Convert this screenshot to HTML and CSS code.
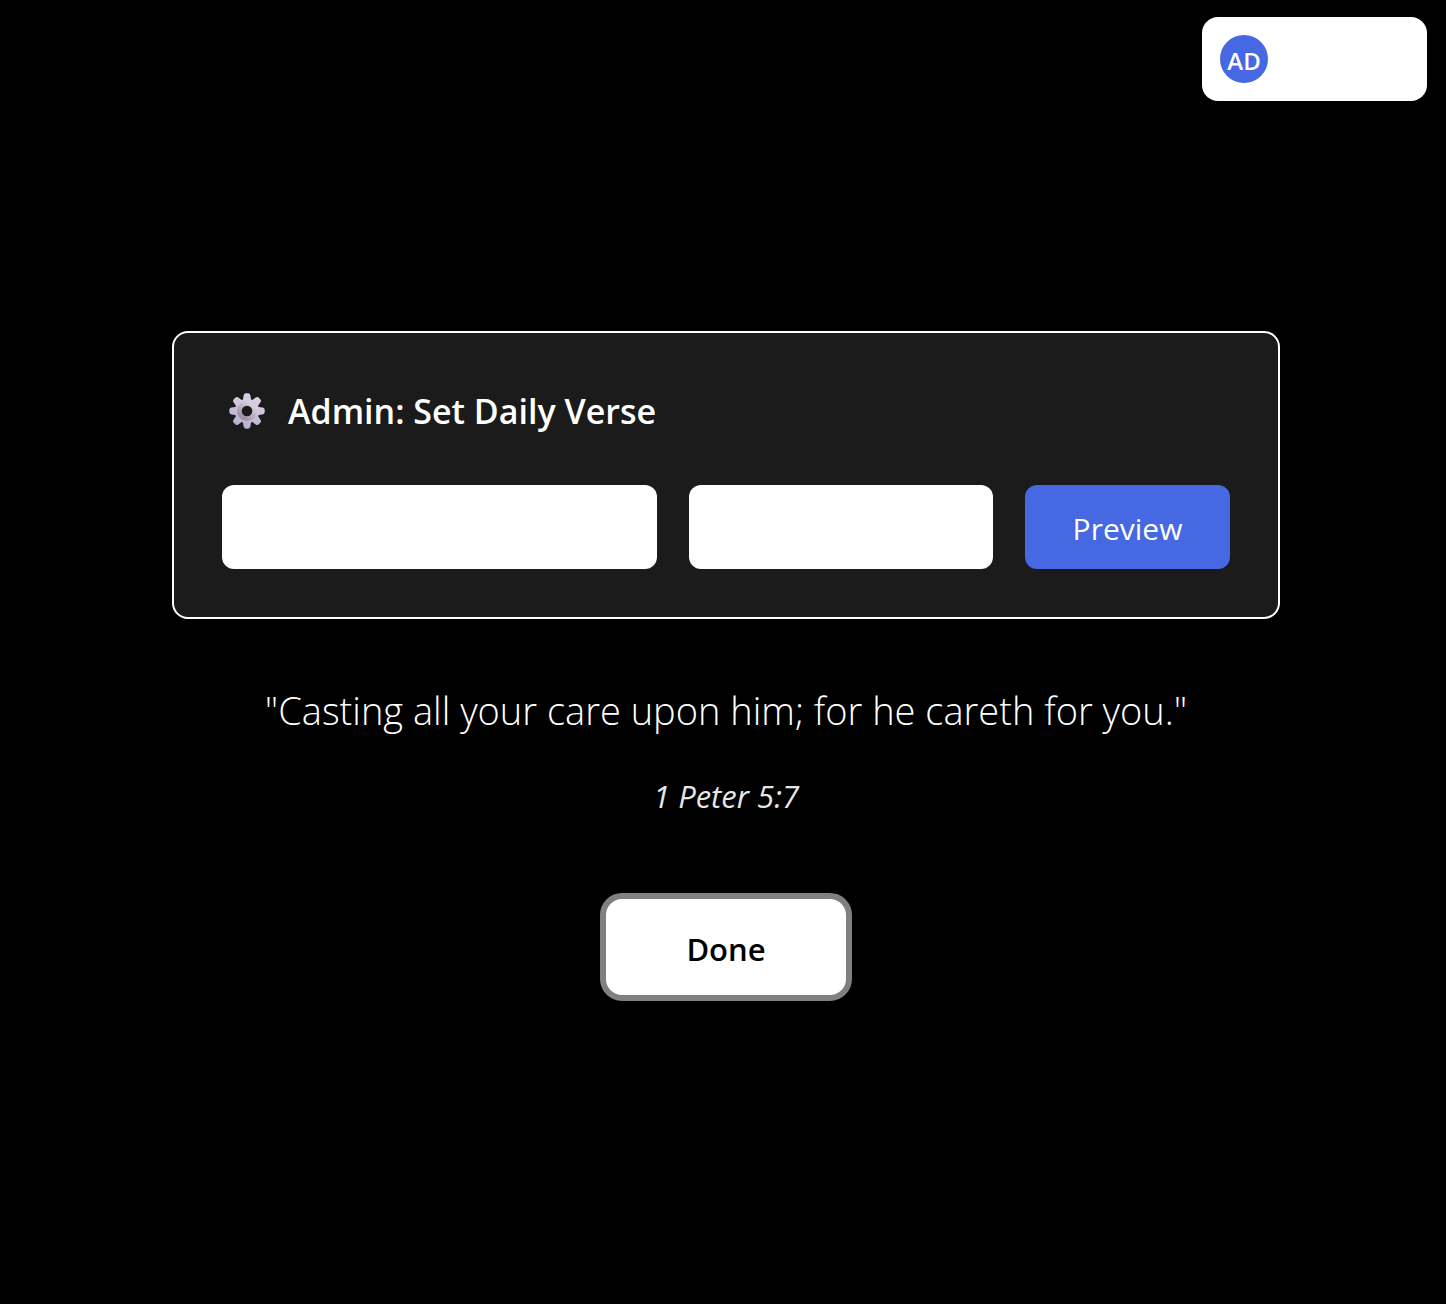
FILE: index.html
```html
<!DOCTYPE html>
<html lang="en">
<head>
  <meta charset="utf-8">
  <meta name="viewport" content="width=device-width, initial-scale=1">
  <title>Daily Verse</title>
  <link rel="stylesheet" href="styles.css">
</head>
<body>
  <header class="topbar">
    <div class="account"><span class="avatar">AD</span></div>
  </header>
  <main class="content">
    <form class="admin-card">
      <h1 class="admin-title">
        <svg class="gear" viewBox="0 0 36 36" aria-hidden="true">
          <defs>
            <linearGradient id="gear-body" x1="0.7" y1="0" x2="0.3" y2="1">
              <stop offset="0" stop-color="#dcd6e6"/>
              <stop offset="1" stop-color="#b9acd0"/>
            </linearGradient>
            <linearGradient id="gear-ring" x1="0.8" y1="0.1" x2="0.2" y2="0.9">
              <stop offset="0" stop-color="#d5cfdc"/>
              <stop offset="1" stop-color="#9c94a6"/>
            </linearGradient>
            <clipPath id="gear-shape">
              <circle cx="18" cy="18" r="12.300"/>
              <path d="M13.400 10L14.600 2.400Q15 .3 17 .3H19Q21 .3 21.400 2.400L22.600 10Z"/>
              <path transform="rotate(45 18 18)" d="M13.400 10L14.600 2.400Q15 .3 17 .3H19Q21 .3 21.400 2.400L22.600 10Z"/>
              <path transform="rotate(90 18 18)" d="M13.400 10L14.600 2.400Q15 .3 17 .3H19Q21 .3 21.400 2.400L22.600 10Z"/>
              <path transform="rotate(135 18 18)" d="M13.400 10L14.600 2.400Q15 .3 17 .3H19Q21 .3 21.400 2.400L22.600 10Z"/>
              <path transform="rotate(180 18 18)" d="M13.400 10L14.600 2.400Q15 .3 17 .3H19Q21 .3 21.400 2.400L22.600 10Z"/>
              <path transform="rotate(225 18 18)" d="M13.400 10L14.600 2.400Q15 .3 17 .3H19Q21 .3 21.400 2.400L22.600 10Z"/>
              <path transform="rotate(270 18 18)" d="M13.400 10L14.600 2.400Q15 .3 17 .3H19Q21 .3 21.400 2.400L22.600 10Z"/>
              <path transform="rotate(315 18 18)" d="M13.400 10L14.600 2.400Q15 .3 17 .3H19Q21 .3 21.400 2.400L22.600 10Z"/>
            </clipPath>
          </defs>
          <rect width="36" height="36" fill="url(#gear-body)" clip-path="url(#gear-shape)"/>
          <circle cx="18" cy="18" r="7.700" fill="#1b1b1b" stroke="url(#gear-ring)" stroke-width="4.800"/>
        </svg>
        <span>Admin: Set Daily Verse</span>
      </h1>
      <div class="fields">
        <input class="field" type="text" name="verse" aria-label="Verse">
        <input class="field" type="text" name="reference" aria-label="Reference">
        <button class="preview" type="button">Preview</button>
      </div>
    </form>
    <p class="verse">"Casting all your care upon him; for he careth for you."</p>
    <p class="reference">1 Peter 5:7</p>
    <button class="done" type="button">Done</button>
  </main>
</body>
</html>
```
FILE: styles.css
```css
* {
  box-sizing: border-box;
}

body {
  margin: 0;
  min-height: 100vh;
  background: #000;
  color: #fff;
  font-family: "Open Sans", "Noto Sans", sans-serif;
}

.topbar {
  display: flex;
  justify-content: flex-end;
  padding: 17px 19px 0;
}

.account {
  display: flex;
  align-items: center;
  width: 225px;
  height: 84px;
  padding: 0 18px;
  border-radius: 16px;
  background: #fff;
}

.avatar {
  display: flex;
  align-items: center;
  justify-content: center;
  width: 48px;
  height: 48px;
  padding-top: 2px;
  border-radius: 50%;
  background: #4668e3;
  font-size: 24px;
  font-weight: 600;
}

.content {
  display: flex;
  flex-direction: column;
  align-items: center;
  padding: 230px 166px 48px 172px;
}

.admin-card {
  width: 100%;
  padding: 48px;
  border: 2px solid #fff;
  border-radius: 16px;
  background: #1b1b1b;
}

.admin-title {
  display: flex;
  align-items: center;
  gap: 23px;
  margin: 0 0 44px;
  padding-left: 7px;
  font-size: 34px;
  font-weight: 600;
  line-height: 60px;
}

.gear {
  flex: none;
  width: 36px;
  height: 36px;
}

.fields {
  display: grid;
  grid-template-columns: 10fr 7fr 205px;
  gap: 32px;
}

.field,
.preview {
  width: 100%;
  min-width: 0;
  height: 84px;
  border: 0;
  border-radius: 12px;
  font-family: inherit;
  font-size: 30px;
}

.field {
  padding: 0 24px;
  background: #fff;
  color: #000;
}

.preview {
  padding-top: 4px;
  background: #4668e3;
  color: #fff;
}

.verse {
  margin: 61px 0 32px;
  font-size: 38px;
  font-weight: 300;
  line-height: 60px;
  text-align: center;
}

.reference {
  margin: 0 0 73px;
  color: #e6e6e6;
  font-size: 31px;
  font-style: italic;
  line-height: 48px;
}

.done {
  width: 252px;
  height: 108px;
  padding-top: 4px;
  border: 6px solid #808080;
  border-radius: 22px;
  background: #fff;
  color: #000;
  font-family: inherit;
  font-size: 31px;
  font-weight: 600;
}
```
